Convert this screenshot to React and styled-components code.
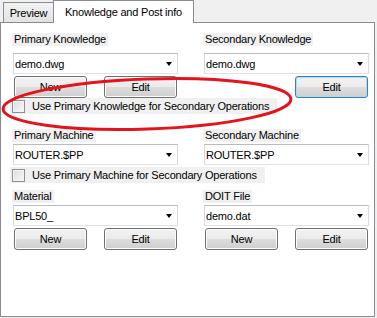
import React from "react";
import styled, { createGlobalStyle } from "styled-components";

const GlobalStyle = createGlobalStyle`
  body {
    margin: 0;
    background: #f0f0f0;
    font-family: "Liberation Sans", Arial, sans-serif;
    font-size: 11px;
    letter-spacing: -0.2px;
    color: #000;
  }
`;

const Frame = styled.div`
  position: relative;
  width: 377px;
  height: 318px;
  background: #f0f0f0;
  overflow: hidden;
`;

const TabStrip = styled.div`
  display: flex;
  align-items: flex-end;
  height: 22px;
  padding-left: 3px;
`;

const Tab = styled.div`
  position: relative;
  box-sizing: border-box;
  display: flex;
  align-items: center;
  justify-content: center;
  width: ${(p) => (p.$active ? 141 : 51)}px;
  border: 1px solid #898c95;
  border-bottom: none;
  height: ${(p) => (p.$active ? 23 : 20)}px;
  margin-bottom: ${(p) => (p.$active ? -1 : 0)}px;
  margin-left: ${(p) => (p.$active ? -1 : 0)}px;
  background: ${(p) =>
    p.$active ? "#fff" : "linear-gradient(#f2f2f2, #e3e3e3)"};
  z-index: ${(p) => (p.$active ? 1 : 0)};
  padding-top: ${(p) => (p.$active ? 0 : 1)}px;
`;

const Panel = styled.div`
  box-sizing: border-box;
  width: 375px;
  height: 295px;
  border: 1px solid #898c95;
  background: #fff;
  padding: 10px 5px 0 12px;
`;

const Section = styled.div`
  display: grid;
  grid-template-columns: 165px 165px;
  column-gap: 26px;
  margin-top: ${(p) => p.$top || 0}px;
`;

const Column = styled.div`
  display: flex;
  flex-direction: column;
`;

const FieldLabel = styled.div`
  align-self: flex-start;
  height: 13px;
  line-height: 13px;
  padding: 0 2px 0 2px;
  margin-left: -1px;
  background: #f0f0f0;
  margin-bottom: ${(p) => p.$gap}px;
  white-space: nowrap;
`;

const Combo = styled.div`
  box-sizing: border-box;
  display: flex;
  align-items: center;
  justify-content: space-between;
  height: 21px;
  padding: 0 5px 0 1px;
  border: 1px solid;
  border-color: #b9bcc2 #d7d9de #dfe2e6 #d7d9de;
  background: #fff;
`;

const Arrow = styled.span`
  width: 0;
  height: 0;
  border-left: 3.5px solid transparent;
  border-right: 3.5px solid transparent;
  border-top: 4px solid #000;
  margin-top: 1px;
`;

const ButtonRow = styled.div`
  display: flex;
  justify-content: ${(p) => (p.$single ? "flex-end" : "space-between")};
  margin-top: 2px;
  padding-left: ${(p) => (p.$single ? 0 : 1)}px;
  padding-right: 1px;
`;

const Button = styled.button`
  box-sizing: border-box;
  width: 73px;
  height: 22px;
  padding: 0;
  font: inherit;
  letter-spacing: inherit;
  color: #000;
  border: 1px solid ${(p) => (p.$focused ? "#3c7fb1" : "#707070")};
  border-radius: 3px;
  background: linear-gradient(#f2f2f2 0%, #ebebeb 50%, #dddddd 51%, #cfcfcf 100%);
  box-shadow: inset 0 0 0 1px ${(p) => (p.$focused ? "#a8dcf5" : "#fcfcfc")};
`;

const CheckRow = styled.label`
  align-self: flex-start;
  display: flex;
  align-items: center;
  gap: 7px;
  height: 16px;
  margin-left: -3px;
  margin-top: ${(p) => p.$top || 0}px;
  padding: 0 8px 0 2px;
  background: #f0f0f0;
  white-space: nowrap;
`;

const CheckBox = styled.span`
  box-sizing: border-box;
  width: 13px;
  height: 13px;
  border: 1px solid #8e8f8f;
  background: linear-gradient(135deg, #d9dbde, #fafafa);
  box-shadow: inset 0 0 0 1px #f4f4f4;
`;

const Wrap = styled.div`
  display: flex;
  flex-direction: column;
`;

const Annotation = styled.svg`
  position: absolute;
  left: 0;
  top: 0;
  pointer-events: none;
`;

const Field = ({ label, value, gap, buttons, focusedEdit }) => (
  <Column>
    <FieldLabel $gap={gap}>{label}</FieldLabel>
    <Combo>
      <span>{value}</span>
      <Arrow />
    </Combo>
    {buttons === "both" && (
      <ButtonRow>
        <Button>New</Button>
        <Button>Edit</Button>
      </ButtonRow>
    )}
    {buttons === "edit" && (
      <ButtonRow $single>
        <Button $focused={focusedEdit}>Edit</Button>
      </ButtonRow>
    )}
  </Column>
);

const Check = ({ top, children }) => (
  <CheckRow $top={top}>
    <CheckBox />
    {children}
  </CheckRow>
);

export default function App() {
  return (
    <Frame>
      <GlobalStyle />
      <TabStrip>
        <Tab>Preview</Tab>
        <Tab $active>Knowledge and Post info</Tab>
      </TabStrip>
      <Panel>
        <Wrap>
          <Section>
            <Field label="Primary Knowledge" value="demo.dwg" gap={7} buttons="both" />
            <Field label="Secondary Knowledge" value="demo.dwg" gap={7} buttons="edit" focusedEdit />
          </Section>
          <Check>Use Primary Knowledge for Secondary Operations</Check>
          <Section $top={15}>
            <Field label="Primary Machine" value="ROUTER.$PP" gap={2} />
            <Field label="Secondary Machine" value="ROUTER.$PP" gap={2} />
          </Section>
          <Check top={2}>Use Primary Machine for Secondary Operations</Check>
          <Section $top={7}>
            <Field label="Material" value="BPL50_" gap={2} buttons="both" />
            <Field label="DOIT File" value="demo.dat" gap={2} buttons="both" />
          </Section>
        </Wrap>
      </Panel>
      <Annotation width="377" height="318" viewBox="0 0 377 318">
        <ellipse
          cx="147"
          cy="104"
          rx="144"
          ry="25"
          transform="rotate(-2 147 104)"
          fill="none"
          stroke="#e5131b"
          strokeWidth="3"
        />
      </Annotation>
    </Frame>
  );
}
